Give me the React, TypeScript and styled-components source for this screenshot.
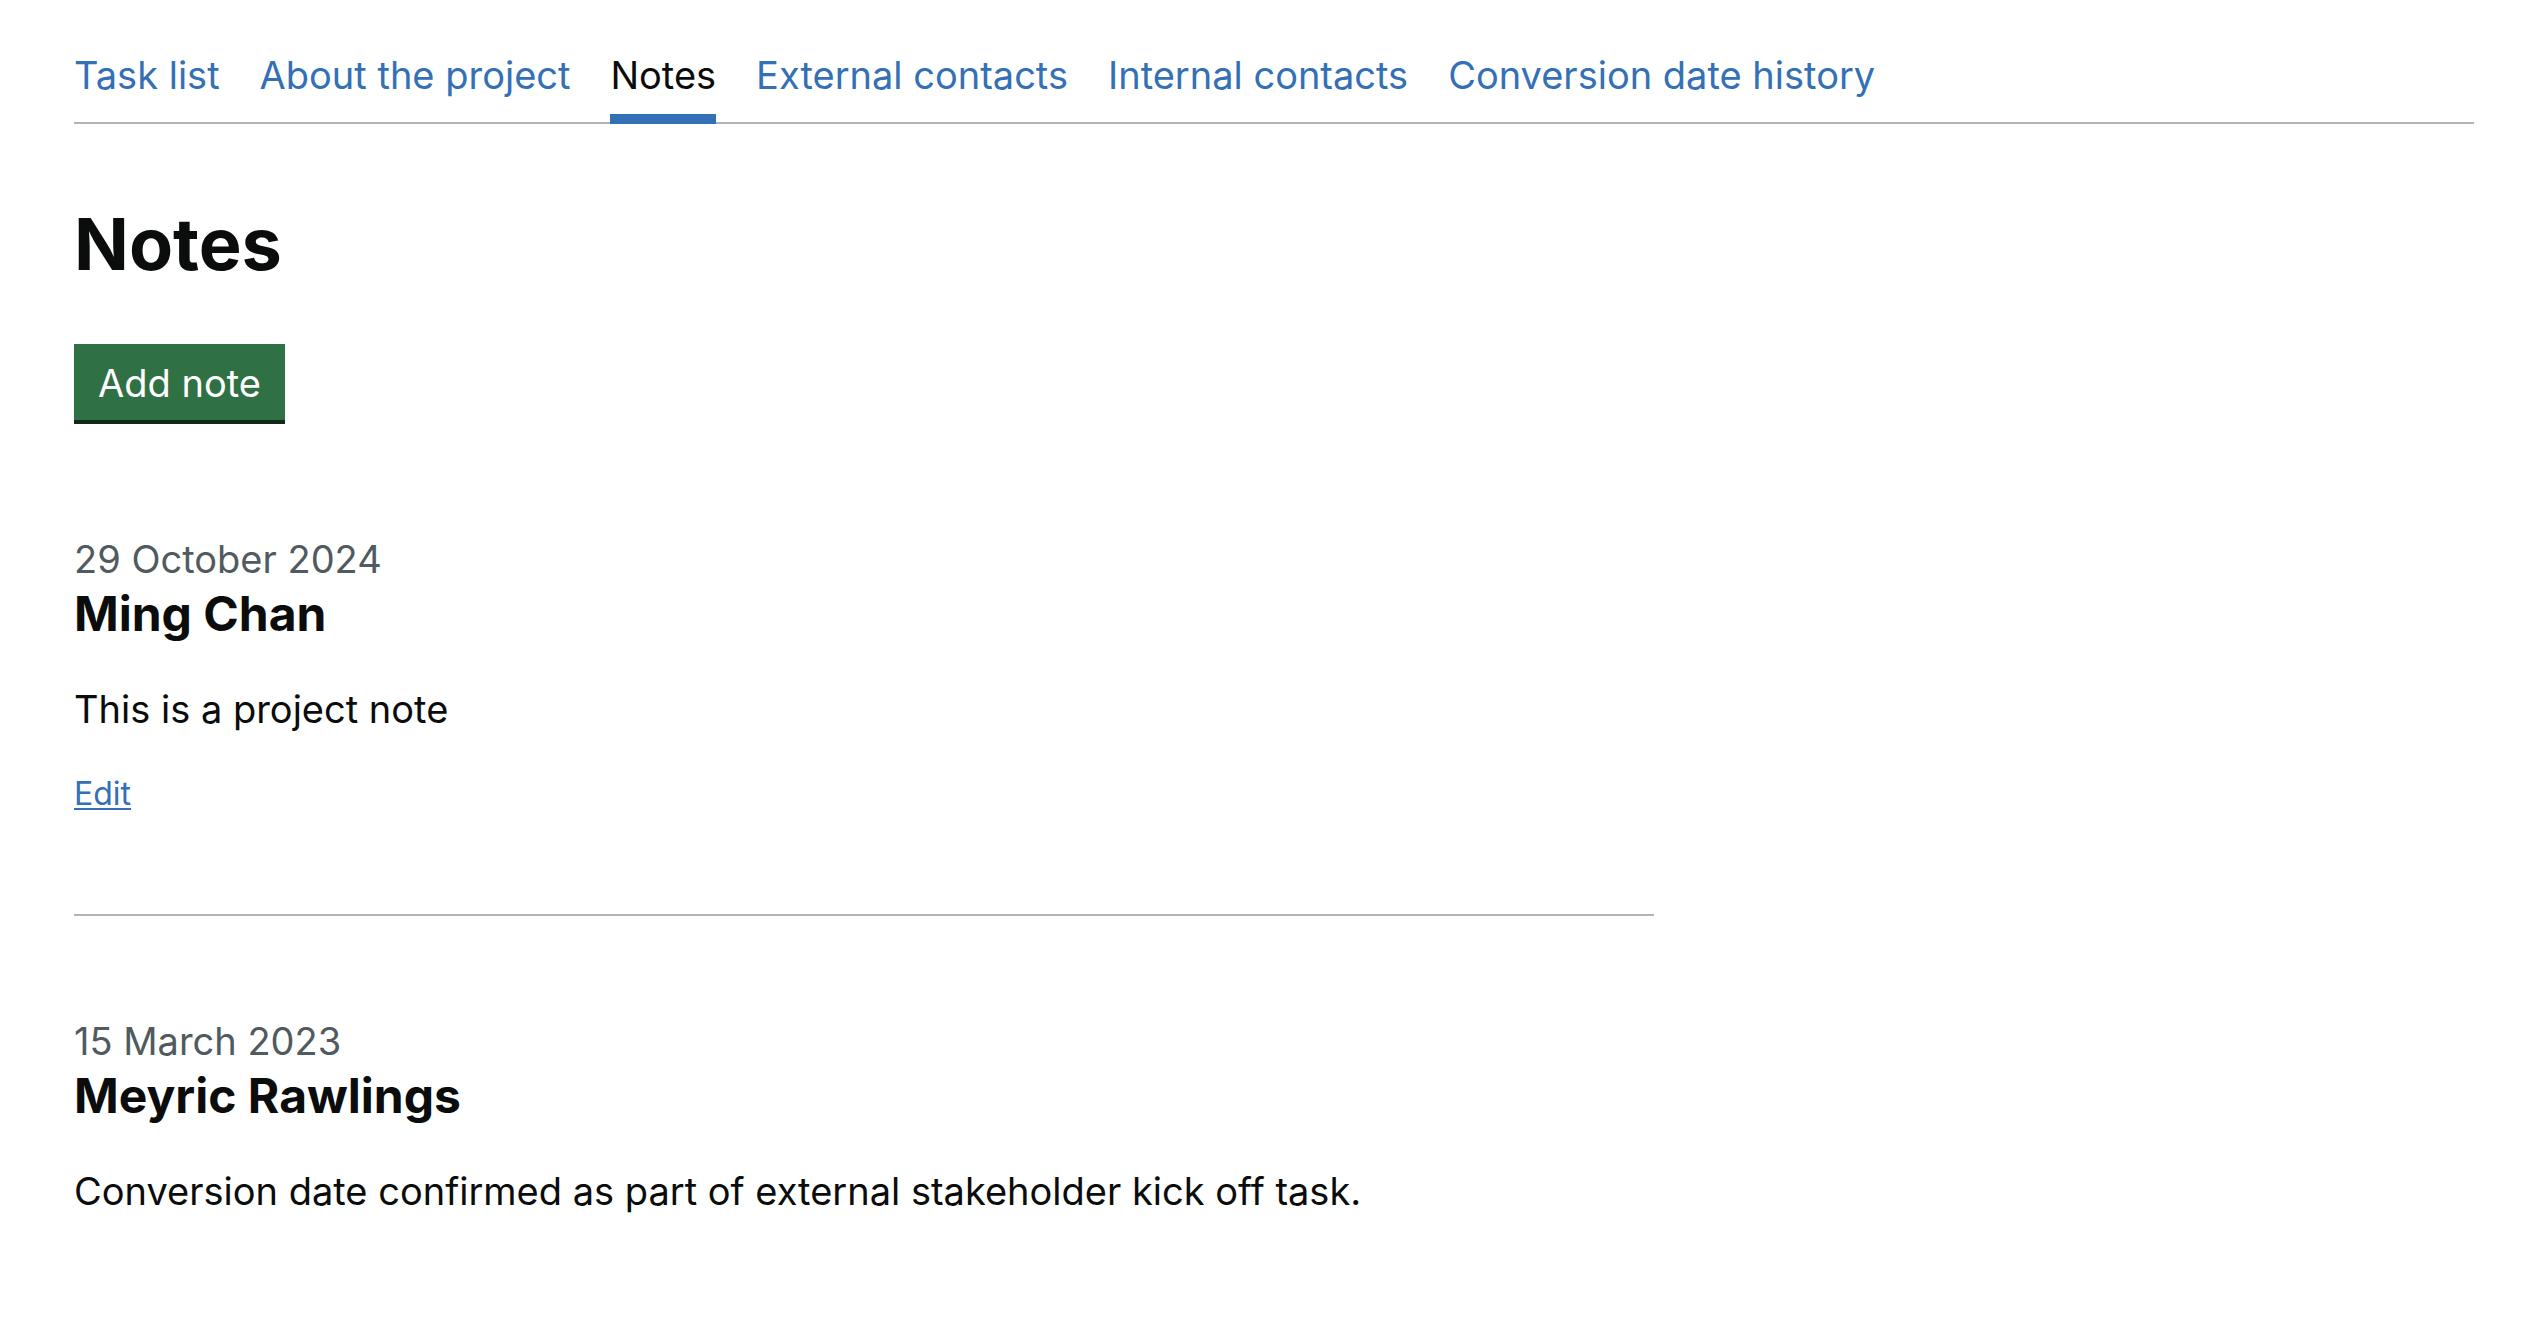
import React from "react";
import styled, { createGlobalStyle } from "styled-components";

const GlobalStyle = createGlobalStyle`
  html, body {
    margin: 0;
    padding: 0;
    background: #ffffff;
  }
  body {
    font-family: Inter, "Noto Sans", "Liberation Sans", sans-serif;
    color: #0b0c0c;
    -webkit-font-smoothing: antialiased;
  }
  * { box-sizing: border-box; }
`;

const Page = styled.div`
  width: 2400px;
  margin-left: 74px;
`;

const TabNav = styled.nav`
  margin-top: 50px;
`;

const TabList = styled.ul`
  display: flex;
  gap: 40px;
  list-style: none;
  margin: 0;
  padding: 0;
  border-bottom: 2px solid #b1b4b6;
`;

const TabItem = styled.li`
  margin: 0;
  padding: 0;
`;

const TabLink = styled.a<{ $active?: boolean }>`
  position: relative;
  display: inline-block;
  font-size: 38px;
  line-height: 50px;
  padding-bottom: 22px;
  text-decoration: none;
  color: ${(p) => (p.$active ? "#0b0c0c" : "#3470b6")};
  ${(p) =>
    p.$active &&
    `
    &::after {
      content: "";
      position: absolute;
      left: 0;
      right: 0;
      bottom: -2px;
      height: 10px;
      background: #3470b6;
    }
  `}
`;

const Heading = styled.h1`
  margin: 80px 0 60px;
  font-size: 72px;
  line-height: 80px;
  font-weight: 700;
  color: #0b0c0c;
`;

const Button = styled.button`
  display: inline-block;
  font-family: inherit;
  font-size: 38px;
  line-height: 38px;
  padding: 16px 20px 14px;
  border: 4px solid transparent;
  border-radius: 0;
  background: #2f7044;
  color: #ffffff;
  box-shadow: 0 4px 0 #0f2b18;
  cursor: pointer;
  margin: 0 0 114px;
`;

const Column = styled.div`
  width: calc((100% + 60px) * 2 / 3 - 60px);
`;

const Note = styled.article`
  display: flex;
  flex-direction: column;
  align-items: flex-start;
`;

const NoteDate = styled.p`
  margin: 0;
  font-size: 38px;
  line-height: 50px;
  color: #505a5f;
`;

const NoteAuthor = styled.h2`
  margin: 0 0 40px;
  font-size: 48px;
  line-height: 60px;
  font-weight: 700;
  color: #0b0c0c;
`;

const NoteBody = styled.p`
  margin: 0;
  font-size: 38px;
  line-height: 50px;
  color: #0b0c0c;
`;

const EditLink = styled.a`
  margin-top: 40px;
  font-size: 32px;
  line-height: 40px;
  color: #3470b6;
  text-decoration: underline;
  text-decoration-thickness: 2px;
  text-underline-offset: 3px;
`;

const Divider = styled.hr`
  margin: 100px 0;
  border: 0;
  border-top: 2px solid #b1b4b6;
  height: 0;
`;

const tabs = [
  "Task list",
  "About the project",
  "Notes",
  "External contacts",
  "Internal contacts",
  "Conversion date history",
];

const notes = [
  {
    date: "29 October 2024",
    author: "Ming Chan",
    body: "This is a project note",
    editable: true,
  },
  {
    date: "15 March 2023",
    author: "Meyric Rawlings",
    body: "Conversion date confirmed as part of external stakeholder kick off task.",
    editable: false,
  },
];

export default function App() {
  return (
    <>
      <GlobalStyle />
      <Page>
        <TabNav aria-label="Project navigation">
          <TabList>
            {tabs.map((t) => (
              <TabItem key={t}>
                <TabLink href="#" $active={t === "Notes"}>
                  {t}
                </TabLink>
              </TabItem>
            ))}
          </TabList>
        </TabNav>
        <Heading>Notes</Heading>
        <Button type="button">Add note</Button>
        <Column>
          {notes.map((n, i) => (
            <React.Fragment key={n.date}>
              {i > 0 && <Divider />}
              <Note>
                <NoteDate>{n.date}</NoteDate>
                <NoteAuthor>{n.author}</NoteAuthor>
                <NoteBody>{n.body}</NoteBody>
                {n.editable && <EditLink href="#">Edit</EditLink>}
              </Note>
            </React.Fragment>
          ))}
        </Column>
      </Page>
    </>
  );
}
